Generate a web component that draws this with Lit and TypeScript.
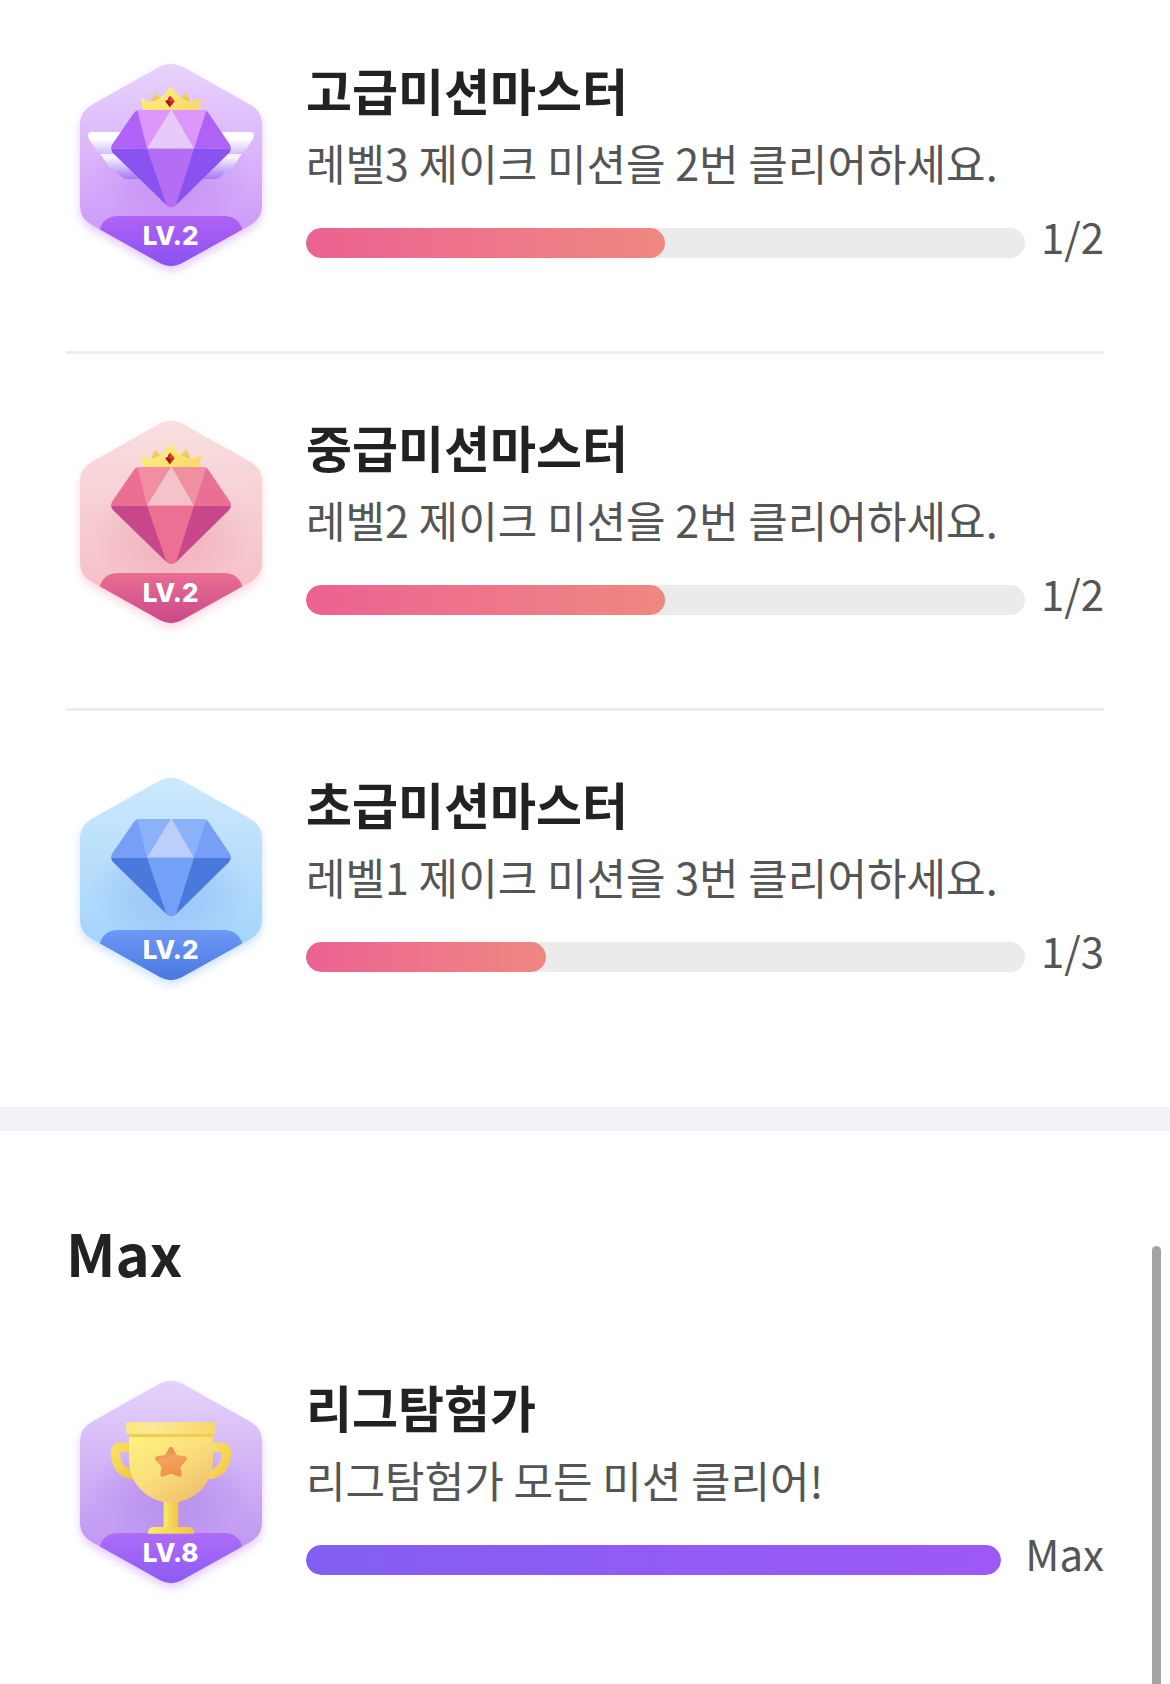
import { LitElement, html, svg, css, nothing } from "lit";
import { customElement, property } from "lit/decorators.js";

type BadgeKind = "purple" | "pink" | "blue" | "trophy";

interface BadgePalette {
  bg: [string, string];
  ribbon: [string, string];
  glow: string;
  shadow: string;
  gem?: { side: string; top: string; center: string; lower: string; dark: string };
}

const PALETTES: Record<BadgeKind, BadgePalette> = {
  purple: {
    bg: ["#e8d3fb", "#cf9df9"],
    ribbon: ["#b062f6", "#8a52f0"],
    glow: "#bb84f0",
    shadow: "#b980ff",
    gem: { side: "#b061f6", top: "#dd96f9", center: "#e8c9fa", lower: "#b56df5", dark: "#8a53ef" },
  },
  pink: {
    bg: ["#f8dfe0", "#f6c1ca"],
    ribbon: ["#ea6d93", "#ca4a8a"],
    glow: "#eba3ae",
    shadow: "#f0a0b4",
    gem: { side: "#eb6f93", top: "#f08fa1", center: "#f5c1ca", lower: "#eb7094", dark: "#c8478a" },
  },
  blue: {
    bg: ["#cde9fc", "#a6d4fb"],
    ribbon: ["#6d99f7", "#4a78de"],
    glow: "#8cb6f6",
    shadow: "#88bcff",
    gem: { side: "#789ff8", top: "#8bb2f8", center: "#bccffb", lower: "#73a1f7", dark: "#4a78dc" },
  },
  trophy: {
    bg: ["#e5d3fa", "#c198f3"],
    ribbon: ["#ae6cf7", "#8c5bf3"],
    glow: "#ab80e6",
    shadow: "#b980ff",
  },
};

const HEXAGON =
  "M301 49Q333 33 365 49L571 164Q606 184 606 222V467Q606 505 571 525L365 640Q333 657 301 640L96 525Q60 505 60 467V222Q60 184 96 164Z";
const GEM =
  "M240 180H430Q440 180 446 190L509 283Q517 296 508 308L351 463Q334 478 317 463L158 308Q149 296 157 283L221 190Q228 180 240 180Z";

@customElement("mission-badge")
export class MissionBadge extends LitElement {
  static styles = css`
    :host {
      display: block;
      flex: none;
    }
    .badge {
      display: block;
      width: 210px;
      height: 228px;
    }
    .level {
      font-family: Inter, "Liberation Sans", sans-serif;
      font-size: 78px;
      font-weight: 800;
      fill: #fff;
      text-anchor: middle;
    }
  `;

  @property() kind: BadgeKind = "purple";
  @property({ type: Number }) level = 1;

  private wing() {
    return svg`
      <path d="M168 362H250V387H204Q188 387 180 376Z" fill="url(#feather3)"/>
      <path d="M121 312H250V362H172Q154 362 144 347Z" fill="url(#feather2)"/>
      <path d="M95 246H220V312H136Q117 312 107 297L87 268Q78 247 95 246Z" fill="url(#feather1)"/>`;
  }

  private wings() {
    return svg`
      ${this.wing()}
      <g transform="translate(666 0) scale(-1 1)">${this.wing()}</g>`;
  }

  private crown() {
    return svg`
      <path d="M274 160L281 133Q285 125 290 132L304 148V160ZM392 160L383 132Q378 125 373 132L360 148V160Z" fill="url(#peak)"/>
      <path d="M250 182L243 148Q243 142 249 146Q262 156 278 154Q298 150 312 133Q321 121 328 113Q332 109 336 113Q343 121 352 133Q366 150 388 154Q405 156 418 147Q425 143 424 150L416 182Z" fill="url(#gold)"/>
      <path d="M330 137L344 154L330 172L316 154Z" fill="#c8281e"/>
      <path d="M330 137L344 154H330Z" fill="#d9402e"/>
      <path d="M316 154H330V172Z" fill="#9c1712"/>
      <circle cx="320" cy="146" r="4" fill="#fff6d8"/>`;
  }

  private gem(c: NonNullable<BadgePalette["gem"]>) {
    return svg`
      <g clip-path="url(#gem)">
        <path d="M140 170H530V296H140Z" fill=${c.side}/>
        <path d="M140 296H530V480H140Z" fill=${c.dark}/>
        <path d="M231 176H441L402 296H261Z" fill=${c.top}/>
        <path d="M334 178L402 296H261Z" fill=${c.center}/>
        <path d="M261 296H402L344 478H324Z" fill=${c.lower}/>
      </g>`;
  }

  private trophy() {
    return svg`
      <path d="M210 227H181Q153 227 153 256C153 304 178 334 222 337L212 308C193 300 180 284 180 262V255H210Z" fill="url(#handle)"/>
      <path d="M456 227H485Q513 227 513 256C513 304 488 334 444 337L454 308C473 300 486 284 486 262V255H456Z" fill="url(#handle)"/>
      <rect x="311" y="400" width="44" height="84" fill="url(#stem)"/>
      <path d="M264 500V494Q266 480 280 480H386Q400 480 402 494V500Z" fill="url(#stem)"/>
      <path d="M207 200H459V281A126 126 0 0 1 207 281Z" fill="url(#cup)"/>
      <rect x="207" y="200" width="252" height="10" fill="#f2cb50"/>
      <rect x="198" y="165" width="270" height="36" rx="7" fill="url(#rim)"/>
      <path d="M333 247L346 271L374 275L354 297L358 322L333 312L308 322L312 297L292 275L320 271Z"
        fill="url(#star)" stroke="url(#star)" stroke-width="14" stroke-linejoin="round"/>`;
  }

  render() {
    const p = PALETTES[this.kind];
    const art =
      this.kind === "trophy"
        ? this.trophy()
        : this.kind === "blue"
          ? svg`<g transform="translate(0 -15)">${this.gem(p.gem!)}</g>`
          : svg`${this.kind === "purple" ? this.wings() : nothing}${this.crown()}${this.gem(p.gem!)}`;
    return html`
      <svg class="badge" viewBox="18 6 630 684" role="img" aria-label="LV.${this.level}">
        <defs>
          <linearGradient id="bg" x1="0" y1="0" x2="0" y2="1">
            <stop offset="0" stop-color=${p.bg[0]} />
            <stop offset="0.8" stop-color=${p.bg[1]} />
          </linearGradient>
          <linearGradient id="ribbon" gradientUnits="userSpaceOnUse" x1="0" y1="498" x2="0" y2="645">
            <stop offset="0" stop-color=${p.ribbon[0]} />
            <stop offset="1" stop-color=${p.ribbon[1]} />
          </linearGradient>
          <radialGradient id="glow">
            <stop offset="0" stop-color=${p.glow} stop-opacity="0.6" />
            <stop offset="0.5" stop-color=${p.glow} stop-opacity="0.36" />
            <stop offset="1" stop-color=${p.glow} stop-opacity="0" />
          </radialGradient>
          <linearGradient id="gold" x1="0" y1="0" x2="1" y2="0.6">
            <stop offset="0" stop-color="#fff07a" />
            <stop offset="0.5" stop-color="#fbe878" />
            <stop offset="1" stop-color="#f8da6a" />
          </linearGradient>
          <linearGradient id="peak" x1="0" y1="0" x2="0" y2="1">
            <stop offset="0" stop-color="#f5d765" />
            <stop offset="1" stop-color="#ecb95c" />
          </linearGradient>
          <linearGradient id="feather1" x1="0" y1="0" x2="0" y2="1">
            <stop offset="0.3" stop-color="#fff" />
            <stop offset="1" stop-color="#cfc0fa" />
          </linearGradient>
          <linearGradient id="feather2" x1="0" y1="0" x2="0" y2="1">
            <stop offset="0.2" stop-color="#f8f2ff" />
            <stop offset="1" stop-color="#c0abf8" />
          </linearGradient>
          <linearGradient id="feather3" x1="0" y1="0" x2="0" y2="1">
            <stop offset="0" stop-color="#c3a2fa" />
            <stop offset="1" stop-color="#a47cf5" />
          </linearGradient>
          <linearGradient id="cup" x1="0" y1="0" x2="0.8" y2="1">
            <stop offset="0" stop-color="#fef47f" />
            <stop offset="0.5" stop-color="#fae07c" />
            <stop offset="1" stop-color="#f1bd6b" />
          </linearGradient>
          <linearGradient id="rim" x1="0" y1="0" x2="1" y2="0">
            <stop offset="0" stop-color="#fbe585" />
            <stop offset="0.3" stop-color="#fbe894" />
            <stop offset="1" stop-color="#f8d668" />
          </linearGradient>
          <linearGradient id="handle" x1="0" y1="0" x2="1" y2="1">
            <stop offset="0" stop-color="#fae561" />
            <stop offset="1" stop-color="#f2c445" />
          </linearGradient>
          <linearGradient id="stem" x1="0" y1="0" x2="1" y2="0">
            <stop offset="0" stop-color="#faec6c" />
            <stop offset="1" stop-color="#f1c24a" />
          </linearGradient>
          <linearGradient id="star" gradientUnits="userSpaceOnUse" x1="315" y1="240" x2="345" y2="328">
            <stop offset="0" stop-color="#df8a4b" />
            <stop offset="0.4" stop-color="#f2a35e" />
            <stop offset="1" stop-color="#ef9045" />
          </linearGradient>
          <clipPath id="hex"><path d=${HEXAGON} /></clipPath>
          <clipPath id="gem"><path d=${GEM} /></clipPath>
          <filter id="soft" x="-20%" y="-20%" width="140%" height="140%">
            <feGaussianBlur stdDeviation="12" />
          </filter>
        </defs>
        <path d=${HEXAGON} transform="translate(0 14)" fill=${p.shadow} opacity="0.4" filter="url(#soft)" />
        <path d=${HEXAGON} fill="url(#bg)" />
        <g clip-path="url(#hex)">
          <ellipse cx="333" cy="380" rx="240" ry="170" fill="url(#glow)" />
          <path d="M118 542Q130 498 174 498H492Q536 498 548 542L560 670H106Z" fill="url(#ribbon)" />
        </g>
        ${art}
        <text class="level" x="332" y="585">LV.${this.level}</text>
      </svg>
    `;
  }
}

interface Mission {
  badge: BadgeKind;
  level: number;
  title: string;
  description: string;
  done: number;
  total: number;
}

@customElement("mission-row")
export class MissionRow extends LitElement {
  static styles = css`
    :host {
      display: flex;
      gap: 30px;
    }
    .body {
      flex: 1;
      min-width: 0;
    }
    .title,
    .description {
      margin: 0;
    }
    .title {
      font-size: 50px;
      font-weight: 700;
      line-height: 74px;
      color: #222;
    }
    .description {
      font-size: 43px;
      line-height: 72px;
      color: #555;
    }
    .progress {
      display: flex;
      align-items: flex-end;
      gap: 16px;
      padding-top: 8px;
    }
    .complete {
      gap: 24px;
    }
    .track {
      flex: 1;
      height: 30px;
      margin-bottom: 8px;
      border-radius: 15px;
      background: #ebebeb;
      overflow: hidden;
    }
    .fill {
      height: 100%;
      border-radius: 15px;
      background: linear-gradient(90deg, #ec6292, #ef8881);
    }
    .complete .fill {
      background: linear-gradient(90deg, #825ef2, #9e58f6);
    }
    .count {
      font-size: 42px;
      line-height: 60px;
      color: #555;
    }
  `;

  @property({ attribute: false }) mission!: Mission;

  render() {
    const m = this.mission;
    const complete = m.done >= m.total;
    return html`
      <mission-badge .kind=${m.badge} .level=${m.level}></mission-badge>
      <div class="body">
        <h3 class="title">${m.title}</h3>
        <p class="description">${m.description}</p>
        <div class="progress ${complete ? "complete" : ""}">
          <div
            class="track"
            role="progressbar"
            aria-label=${m.title}
            aria-valuemin="0"
            aria-valuenow=${m.done}
            aria-valuemax=${m.total}
          >
            <div class="fill" style="width:${(m.done / m.total) * 100}%"></div>
          </div>
          <span class="count">${complete ? "Max" : `${m.done}/${m.total}`}</span>
        </div>
      </div>
    `;
  }
}

const ACTIVE: Mission[] = [
  { badge: "purple", level: 2, title: "고급미션마스터", description: "레벨3 제이크 미션을 2번 클리어하세요.", done: 1, total: 2 },
  { badge: "pink", level: 2, title: "중급미션마스터", description: "레벨2 제이크 미션을 2번 클리어하세요.", done: 1, total: 2 },
  { badge: "blue", level: 2, title: "초급미션마스터", description: "레벨1 제이크 미션을 3번 클리어하세요.", done: 1, total: 3 },
];

const FINISHED: Mission[] = [
  { badge: "trophy", level: 8, title: "리그탐험가", description: "리그탐험가 모든 미션 클리어!", done: 8, total: 8 },
];

@customElement("app-root")
export class AppRoot extends LitElement {
  static styles = css`
    :host {
      display: block;
      min-height: 100vh;
      background: #fff;
      font-family: "Noto Sans CJK KR", sans-serif;
    }
    .section {
      padding: 0 66px;
    }
    .section + .section {
      border-top: 24px solid #f2f3f9;
    }
    .list {
      list-style: none;
      margin: 0;
      padding: 0;
    }
    .item {
      padding: 55px 0 71px;
    }
    .active .item:first-child {
      padding-top: 52px;
    }
    .item + .item {
      border-top: 3px solid #eee;
    }
    .active {
      padding-bottom: 42px;
    }
    .heading {
      margin: 0;
      padding: 77px 0 18px;
      font-size: 58px;
      font-weight: 700;
      line-height: 88px;
      color: #222;
    }
    .scroll-thumb {
      position: fixed;
      top: 74%;
      right: 9px;
      bottom: 0;
      width: 9px;
      border-radius: 5px 5px 0 0;
      background: #a4a4a4;
    }
  `;

  private list(missions: Mission[]) {
    return html`
      <ul class="list">
        ${missions.map((m) => html`<li class="item"><mission-row .mission=${m}></mission-row></li>`)}
      </ul>
    `;
  }

  render() {
    return html`
      <main>
        <section class="section active">${this.list(ACTIVE)}</section>
        <section class="section">
          <h2 class="heading">Max</h2>
          ${this.list(FINISHED)}
        </section>
      </main>
      <div class="scroll-thumb" aria-hidden="true"></div>
    `;
  }
}
